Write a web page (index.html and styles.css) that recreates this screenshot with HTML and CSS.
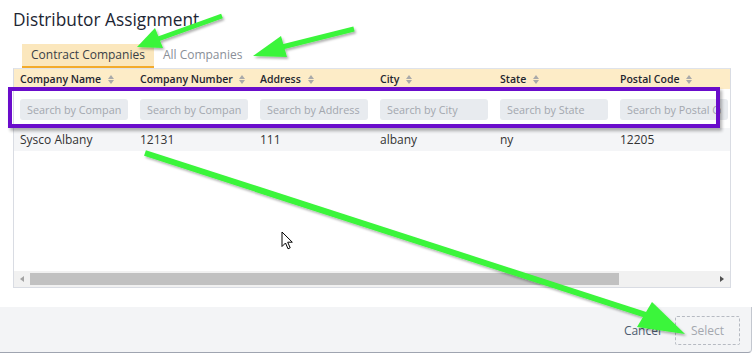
FILE: index.html
```html
<!DOCTYPE html>
<html lang="en">
<head>
    <meta charset="UTF-8">
    <meta name="viewport" content="width=device-width, initial-scale=1.0">
    <title>Distributor Assignment</title>
    <link rel="stylesheet" href="styles.css">
</head>
<body>
    <div class="dialog">
        <h2 class="dialog-title">Distributor Assignment</h2>

        <div class="tabs">
            <span class="tab active">Contract Companies</span>
            <span class="tab">All Companies</span>
        </div>

        <div class="grid">
            <div class="grid-scroll">
                <div class="grid-row grid-head">
                    <div class="cell">Company Name <svg class="sort" width="6" height="9" viewBox="0 0 6 9"><path d="M0 4 L3 0 L6 4 Z M0 5 L3 9 L6 5 Z"/></svg></div>
                    <div class="cell">Company Number <svg class="sort" width="6" height="9" viewBox="0 0 6 9"><path d="M0 4 L3 0 L6 4 Z M0 5 L3 9 L6 5 Z"/></svg></div>
                    <div class="cell">Address <svg class="sort" width="6" height="9" viewBox="0 0 6 9"><path d="M0 4 L3 0 L6 4 Z M0 5 L3 9 L6 5 Z"/></svg></div>
                    <div class="cell">City <svg class="sort" width="6" height="9" viewBox="0 0 6 9"><path d="M0 4 L3 0 L6 4 Z M0 5 L3 9 L6 5 Z"/></svg></div>
                    <div class="cell">State <svg class="sort" width="6" height="9" viewBox="0 0 6 9"><path d="M0 4 L3 0 L6 4 Z M0 5 L3 9 L6 5 Z"/></svg></div>
                    <div class="cell">Postal Code <svg class="sort" width="6" height="9" viewBox="0 0 6 9"><path d="M0 4 L3 0 L6 4 Z M0 5 L3 9 L6 5 Z"/></svg></div>
                </div>
                <div class="grid-row grid-filter">
                    <div class="cell"><input type="text" placeholder="Search by Company Name"></div>
                    <div class="cell"><input type="text" placeholder="Search by Company Number"></div>
                    <div class="cell"><input type="text" placeholder="Search by Address"></div>
                    <div class="cell"><input type="text" placeholder="Search by City"></div>
                    <div class="cell"><input type="text" placeholder="Search by State"></div>
                    <div class="cell"><input type="text" placeholder="Search by Postal Code"></div>
                </div>
                <div class="grid-row grid-data">
                    <div class="cell">Sysco Albany</div>
                    <div class="cell">12131</div>
                    <div class="cell">111</div>
                    <div class="cell">albany</div>
                    <div class="cell">ny</div>
                    <div class="cell">12205</div>
                </div>
            </div>
            <div class="grid-empty"></div>
            <div class="hscroll">
                <span class="hscroll-arrow left"></span>
                <div class="hscroll-track"><div class="hscroll-thumb"></div></div>
                <span class="hscroll-arrow right"></span>
            </div>
        </div>

        <div class="dialog-footer">
            <a class="btn-link">Cancel</a>
            <button class="btn-select" disabled>Select</button>
        </div>

        <!-- annotations drawn over the screenshot -->
        <div class="mark-box"></div>

        <svg class="mark-arrows" width="753" height="353" viewBox="0 0 753 353">
            <defs>
                <filter id="shade" x="-10%" y="-10%" width="130%" height="130%">
                    <feDropShadow dx="1.5" dy="2" stdDeviation="1.2" flood-color="#000" flood-opacity="0.3"/>
                </filter>
            </defs>
            <g filter="url(#shade)" fill="#3af53a" stroke="#3af53a">
                <line x1="222" y1="16" x2="158" y2="39" stroke-width="5"/>
                <polygon points="137,47 163,48 155,28" stroke="none"/>

                <line x1="354" y1="29" x2="282" y2="47" stroke-width="5"/>
                <polygon points="253,56 287,57 281,36" stroke="none"/>

                <line x1="145" y1="153" x2="646" y2="315" stroke-width="6"/>
                <polygon points="685,334 652,302 637,327" stroke="none"/>
            </g>
        </svg>

        <svg class="pointer" width="13" height="20" viewBox="0 0 13 20">
            <path d="M1 1 L1 15.5 L4.5 12 L7 17.8 L9.2 16.8 L6.7 11.2 L11.3 11.2 Z" fill="#fff" stroke="#000" stroke-width="1" stroke-linejoin="round"/>
        </svg>
    </div>
</body>
</html>
```

FILE: styles.css
```css
* {
    box-sizing: border-box;
}

body {
    margin: 0;
    font-family: "Open Sans", "Noto Sans", sans-serif;
    color: #333;
    background-color: #fff;
}

.dialog {
    position: relative;
    width: 753px;
    height: 353px;
    overflow: hidden;
}

.dialog-title {
    margin: 0;
    padding: 8px 13px 0;
    font-size: 17.3px;
    font-weight: 400;
    line-height: 24px;
    color: #1d2633;
}

.tabs {
    display: flex;
    margin: 12px 0 0 22px;
    height: 24px;
}

.tab {
    padding: 0 9px;
    font-size: 12px;
    line-height: 22px;
    color: #8a8f98;
    border-bottom: 2px solid transparent;
}

.tab.active {
    background-color: #fbe7bd;
    border-bottom-color: #f3ab2c;
    color: #3a3f47;
}

/* grid */
.grid {
    margin: 0 22px 0 13px;
    border: 1px solid #d9dce3;
    border-top-color: #dfe3ea;
}

.grid-scroll {
    overflow: hidden;
}

.grid-row {
    display: flex;
    width: 840px;
}

.cell {
    flex: none;
    width: 120px;
    padding-left: 6px;
    white-space: nowrap;
    overflow: hidden;
}

.grid-head {
    height: 20px;
    background-color: #fdecc7;
}

.grid-head .cell {
    font-size: 10.5px;
    font-weight: 600;
    line-height: 20px;
    color: #1f2630;
}

.sort {
    margin-left: 4px;
    fill: #a9a9a9;
    vertical-align: -1px;
}

.grid-filter {
    height: 39px;
    padding-top: 10px;
}

.grid-filter input {
    display: block;
    width: 108px;
    height: 21px;
    padding: 0 7px;
    border: none;
    border-radius: 3px;
    background-color: #e8ebef;
    font-family: "Open Sans", "Noto Sans", sans-serif;
    font-size: 10.8px;
    outline: none;
}

.grid-filter input::placeholder {
    color: #a3a7ae;
}

.grid-data {
    height: 23px;
    background-color: #f4f5f7;
}

.grid-data .cell {
    font-size: 12px;
    line-height: 23px;
    color: #333;
}

.grid-empty {
    height: 120px;
}

.hscroll {
    display: flex;
    height: 16px;
    background-color: #f1f1f1;
}

.hscroll-arrow {
    flex: none;
    width: 16px;
    position: relative;
}

.hscroll-arrow::after {
    content: "";
    position: absolute;
    top: 5px;
    border-top: 3.5px solid transparent;
    border-bottom: 3.5px solid transparent;
}

.hscroll-arrow.left::after {
    left: 6px;
    border-right: 4px solid #a3a3a3;
}

.hscroll-arrow.right::after {
    left: 6px;
    border-left: 4px solid #505050;
}

.hscroll-track {
    flex: 1;
    padding: 2px 0;
}

.hscroll-thumb {
    width: 589px;
    height: 12px;
    background-color: #c1c1c1;
}

/* footer */
.dialog-footer {
    display: flex;
    justify-content: flex-end;
    align-items: center;
    gap: 14px;
    margin-top: 19px;
    margin-right: 1px;
    height: 46px;
    padding: 1px 11px 0 0;
    background-color: #f3f4f6;
    border-bottom: 1px solid #9fa4b0;
    border-right: 1px solid #c3c7cf;
    border-bottom-right-radius: 4px;
}

.btn-link {
    font-size: 12px;
    color: #4c5b70;
    cursor: pointer;
}

.btn-select {
    width: 65px;
    height: 29px;
    border: 1px dashed #b6bac2;
    border-radius: 2px;
    background: transparent;
    font-family: "Open Sans", "Noto Sans", sans-serif;
    font-size: 12px;
    color: #a4a8af;
}

/* overlays */
.mark-box {
    position: absolute;
    left: 8px;
    top: 87px;
    width: 712px;
    height: 41px;
    border: 4px solid #6a0ccb;
    box-shadow: 2px 3px 3px rgba(0, 0, 0, 0.3);
    pointer-events: none;
}

.mark-arrows {
    position: absolute;
    left: 0;
    top: 0;
    pointer-events: none;
}

.pointer {
    position: absolute;
    left: 281px;
    top: 231px;
}
```
